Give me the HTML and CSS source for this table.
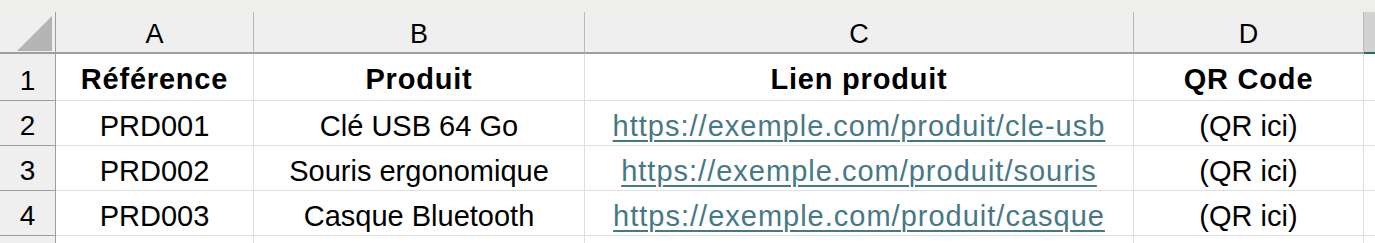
FILE: index.html
```html
<!DOCTYPE html>
<html lang="fr">
<head>
<meta charset="utf-8">
<link rel="stylesheet" href="styles.css">
</head>
<body>
<div class="topbar"></div>
<div class="sheet">
  <div class="corner"><span class="tri"></span></div>
  <div class="colhead">A</div>
  <div class="colhead">B</div>
  <div class="colhead">C</div>
  <div class="colhead">D</div>
  <div class="colhead sel"></div>

  <div class="rowhead r1">1</div>
  <div class="cell r1 bold">Référence</div>
  <div class="cell r1 bold">Produit</div>
  <div class="cell r1 bold">Lien produit</div>
  <div class="cell r1 bold">QR Code</div>
  <div class="cell r1 empty"></div>

  <div class="rowhead">2</div>
  <div class="cell">PRD001</div>
  <div class="cell">Clé USB 64 Go</div>
  <div class="cell"><a class="link" href="#">https://exemple.com/produit/cle-usb</a></div>
  <div class="cell">(QR ici)</div>
  <div class="cell empty"></div>

  <div class="rowhead">3</div>
  <div class="cell">PRD002</div>
  <div class="cell">Souris ergonomique</div>
  <div class="cell"><a class="link" href="#">https://exemple.com/produit/souris</a></div>
  <div class="cell">(QR ici)</div>
  <div class="cell empty"></div>

  <div class="rowhead">4</div>
  <div class="cell">PRD003</div>
  <div class="cell">Casque Bluetooth</div>
  <div class="cell"><a class="link" href="#">https://exemple.com/produit/casque</a></div>
  <div class="cell">(QR ici)</div>
  <div class="cell empty"></div>

  <div class="rowhead last"></div>
  <div class="cell last"></div>
  <div class="cell last"></div>
  <div class="cell last"></div>
  <div class="cell last"></div>
  <div class="cell last empty"></div>
</div>
</body>
</html>
```

FILE: styles.css
```css
html, body {
  margin: 0;
  padding: 0;
  background: #ffffff;
  overflow: hidden;
}
body {
  font-family: "Liberation Sans", Arial, sans-serif;
  color: #000;
}
.topbar {
  height: 12px;
  background: #f0eeeb;
}
.sheet {
  display: grid;
  grid-template-columns: 56px 198px 331px 549px 230px 1fr;
  grid-template-rows: 42px 47px 45px 45px 45px 7px;
  overflow: hidden;
}
.sheet > div {
  box-sizing: border-box;
  overflow: hidden;
}
.corner {
  position: relative;
  background: #efefef;
  border-right: 1px solid #9e9e9e;
  border-bottom: 2px solid #9e9e9e;
}
.tri {
  position: absolute;
  left: 17px;
  top: 4px;
  width: 0;
  height: 0;
  border-left: 35px solid transparent;
  border-bottom: 35px solid #b4b4b4;
}
.colhead {
  background: #efefef;
  border-right: 1px solid #b8b8b8;
  border-bottom: 2px solid #9e9e9e;
  display: flex;
  align-items: center;
  justify-content: center;
  font-size: 27px;
  padding-top: 4px;
  color: #000;
}
.colhead.sel {
  background: #d2d2d2;
  border-right: none;
  border-bottom: 2px solid #217346;
}
.rowhead {
  background: #efefef;
  border-right: 1px solid #9e9e9e;
  border-bottom: 1px solid #9e9e9e;
  display: flex;
  align-items: flex-end;
  justify-content: center;
  font-size: 28px;
  line-height: 1;
  padding-bottom: 5px;
  color: #000;
}
.cell {
  border-right: 1px solid #dedede;
  border-bottom: 1px solid #dedede;
  display: flex;
  align-items: flex-end;
  justify-content: center;
  font-size: 29px;
  line-height: 1;
  padding-bottom: 4px;
  white-space: nowrap;
}
.cell.empty {
  border-right: none;
}
.cell.bold {
  font-weight: bold;
  letter-spacing: 0.8px;
  padding-bottom: 6px;
}
.last {
  border-bottom: none;
}
.link {
  color: #467886;
  letter-spacing: 1px;
  text-decoration: underline;
  text-decoration-thickness: 2px;
  text-underline-offset: 4px;
}
```
